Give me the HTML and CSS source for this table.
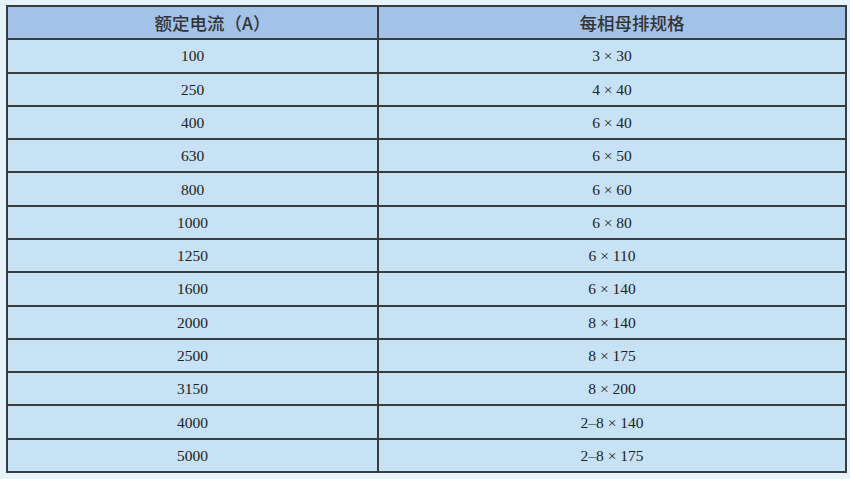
FILE: index.html
```html
<!DOCTYPE html>
<html lang="zh">
<head>
<meta charset="utf-8">
<link rel="stylesheet" href="styles.css">
</head>
<body>
<div class="table">
  <div class="cell head">额定电流（A）</div><div class="cell head">每相母排规格</div>
  <div class="cell">100</div><div class="cell">3 × 30</div>
  <div class="cell">250</div><div class="cell">4 × 40</div>
  <div class="cell">400</div><div class="cell">6 × 40</div>
  <div class="cell">630</div><div class="cell">6 × 50</div>
  <div class="cell">800</div><div class="cell">6 × 60</div>
  <div class="cell">1000</div><div class="cell">6 × 80</div>
  <div class="cell">1250</div><div class="cell">6 × 110</div>
  <div class="cell">1600</div><div class="cell">6 × 140</div>
  <div class="cell">2000</div><div class="cell">8 × 140</div>
  <div class="cell">2500</div><div class="cell">8 × 175</div>
  <div class="cell">3150</div><div class="cell">8 × 200</div>
  <div class="cell">4000</div><div class="cell">2–8 × 140</div>
  <div class="cell">5000</div><div class="cell">2–8 × 175</div>
</div>
</body>
</html>
```
FILE: styles.css
```css
html, body {
  margin: 0;
  padding: 0;
  background: #e7f3fb;
  width: 850px;
  height: 479px;
  overflow: hidden;
}
.table {
  margin: 5px 0 0 6px;
  width: 841px;
  height: 468px;
  box-sizing: border-box;
  padding: 2px;
  background: #3a3b3d;
  display: grid;
  grid-template-columns: 369px 1fr;
  grid-template-rows: repeat(14, 1fr);
  gap: 2px;
}
.cell {
  background: #c8e2f5;
  display: flex;
  align-items: center;
  justify-content: center;
  font-family: "Liberation Serif", "DejaVu Serif", serif;
  font-size: 15.5px;
  color: #222;
  padding-top: 1px;
}
.cell.head {
  background: #a2c3e7;
  font-family: "Noto Sans CJK SC", "Noto Sans", sans-serif;
  font-size: 17.5px;
  font-weight: 500;
  color: #333;
  padding-top: 0;
  padding-left: 40px;
}
```
